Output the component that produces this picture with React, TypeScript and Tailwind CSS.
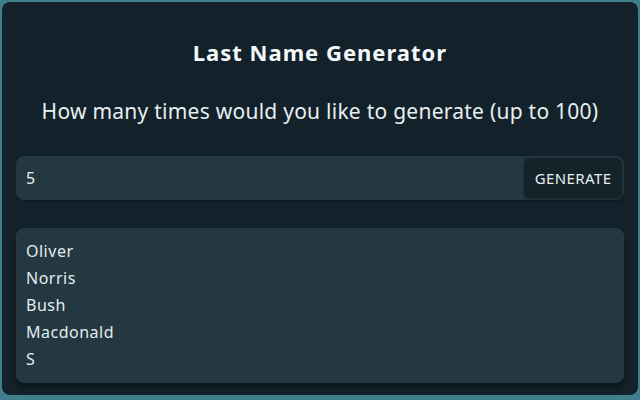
import React from "react";

export default function App() {
  const names = ["Oliver", "Norris", "Bush", "Macdonald", "S"];
  return (
    <div
      className="w-[640px] h-[400px] bg-[#3f7f8c] p-[2px] pb-[5px]"
      style={{ fontFamily: '"Noto Sans", "Open Sans", sans-serif' }}
    >
      <div className="h-full rounded-[8px] bg-[#13222a] px-[14px] pt-[36px] flex flex-col">
        <h1 className="text-center text-[#f3f8f9] text-[22px] font-bold leading-[28px] tracking-[1px]">
          Last Name Generator
        </h1>
        <p className="mt-[31px] text-center text-[#e8eff1] text-[21px] leading-[28px] tracking-[0.25px]">
          How many times would you like to generate (up to 100)
        </p>
        <div className="mt-[31px] h-[44px] rounded-[8px] bg-[#233840] flex items-center pl-[10px] pr-[2px] shadow-[0_1px_2px_rgba(0,0,0,0.3)]">
          <span className="flex-1 text-[#e8eff1] text-[16px]">5</span>
          <button className="h-[40px] w-[98px] rounded-[6px] bg-[#142329] text-[#e8eff1] text-[15px] tracking-[0.4px] shadow-[0_1px_3px_rgba(0,0,0,0.4)]">
            GENERATE
          </button>
        </div>
        <div className="mt-[28px] h-[155px] rounded-[8px] bg-[#233840] px-[10px] pt-[10px] shadow-[0_5px_4px_rgba(0,0,0,0.35)]">
          {names.map((n) => (
            <div key={n} className="text-[#e3ebee] text-[16px] leading-[27px] tracking-[0.5px]">
              {n}
            </div>
          ))}
        </div>
      </div>
    </div>
  );
}
